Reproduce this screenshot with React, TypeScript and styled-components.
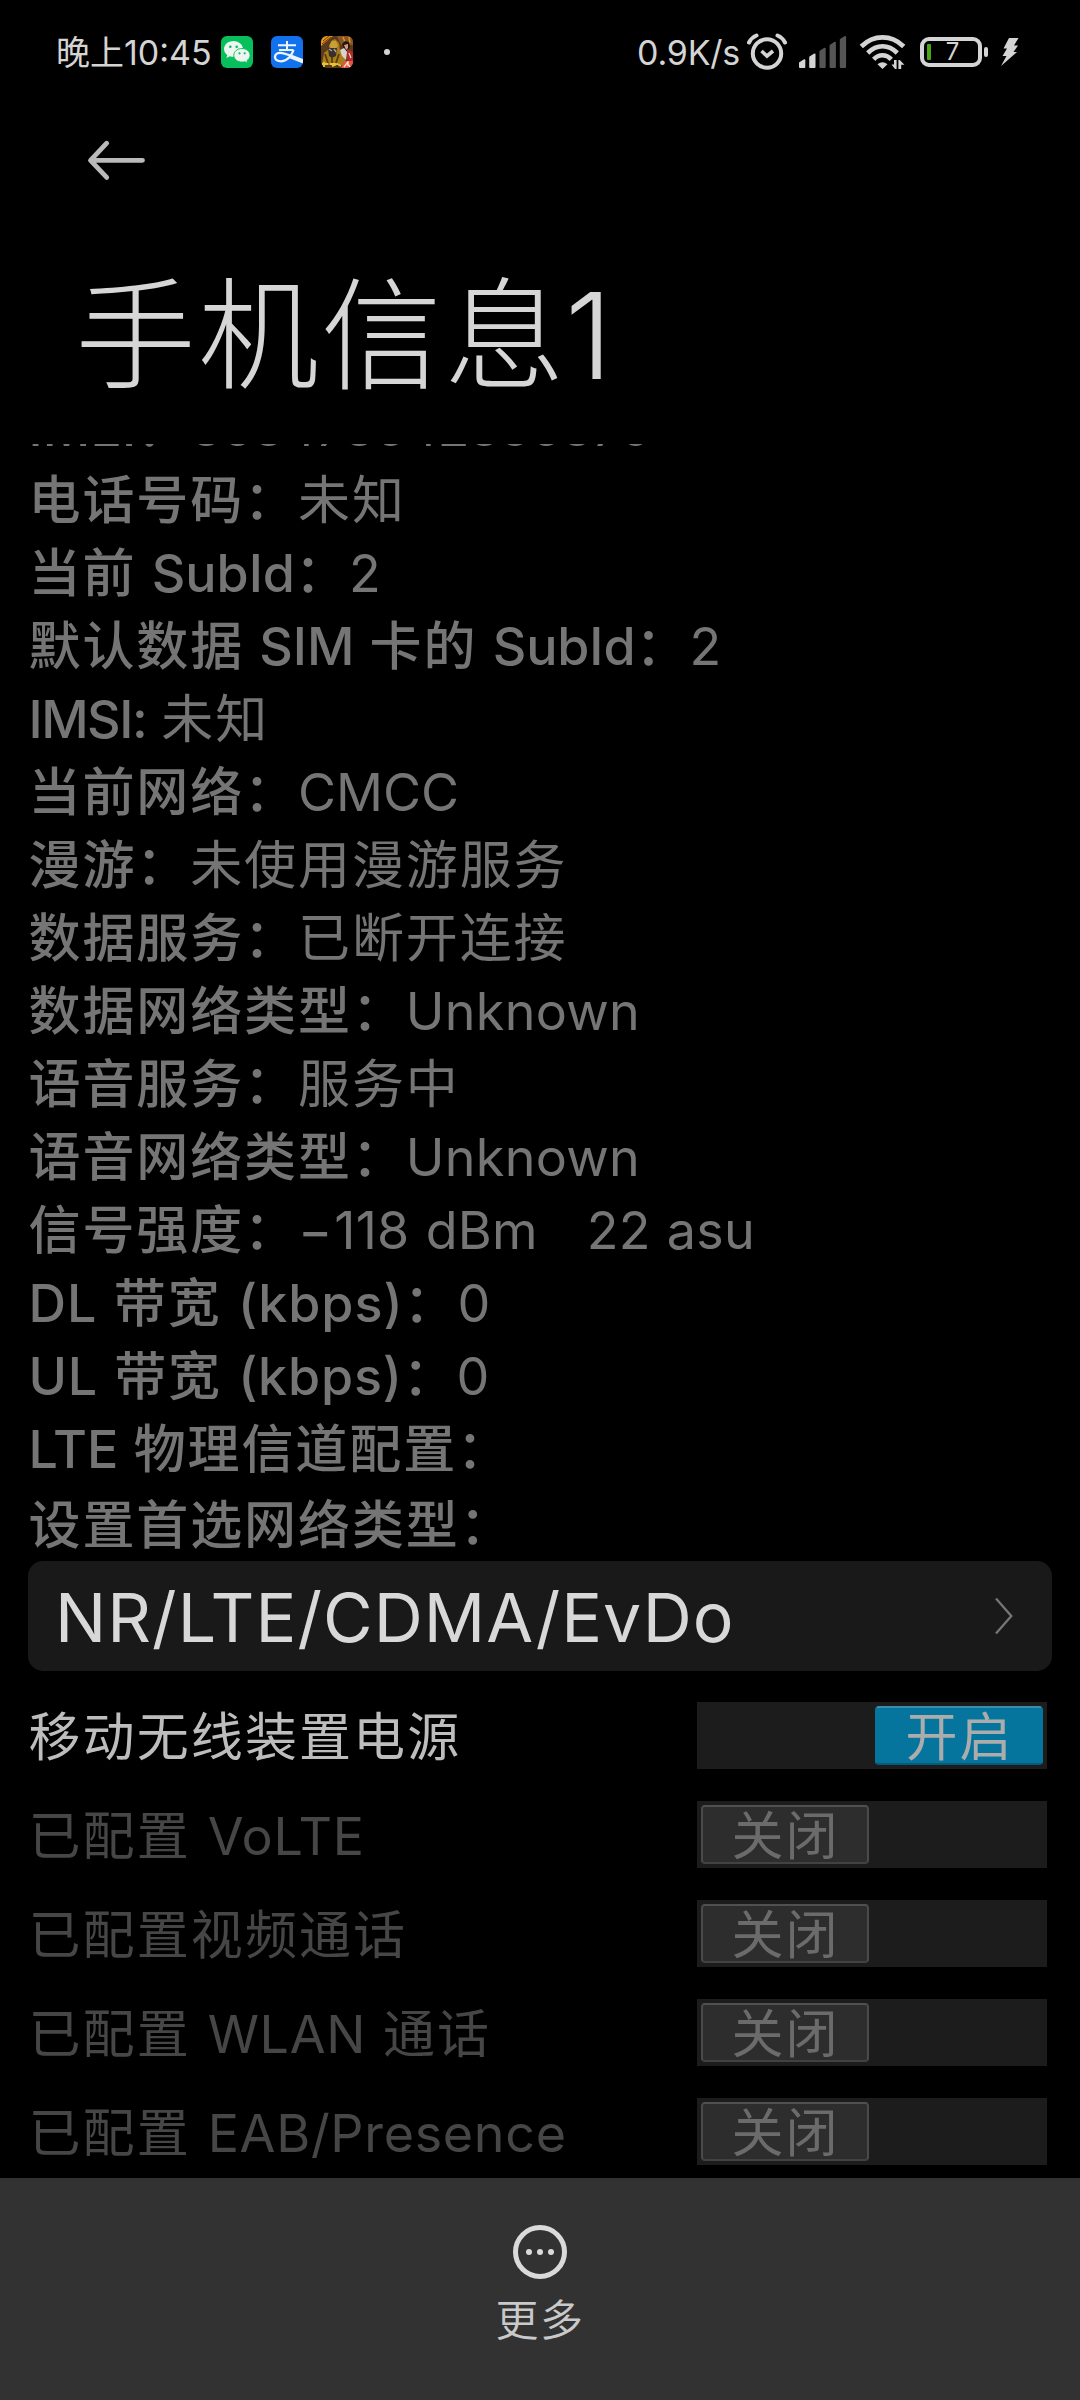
import React from "react";
import styled, { createGlobalStyle } from "styled-components";

const GlobalStyle = createGlobalStyle`
  * { box-sizing: border-box; }
  body { margin: 0; background: #000; }
`;

const Screen = styled.div`
  width: 1080px;
  height: 2400px;
  display: flex;
  flex-direction: column;
  background: #000;
  color: #d4d4d4;
  font-family: "Inter", "Noto Sans CJK SC", sans-serif;
  overflow: hidden;
`;

const StatusBar = styled.div`
  display: flex;
  align-items: center;
  justify-content: space-between;
  height: 104px;
  padding: 0 61px 0 56px;
`;

const StatusSide = styled.div`
  display: flex;
  align-items: center;
  height: 44px;
`;

const StatusText = styled.span<{ $width: number; $spacing: number }>`
  width: ${(p) => p.$width}px;
  padding-top: 1px;
  font-size: 34px;
  line-height: 44px;
  letter-spacing: ${(p) => p.$spacing}px;
  white-space: nowrap;
`;

const AppIcon = styled.svg`
  width: 32px;
  height: 32px;
  margin-right: 18px;
  border-radius: 6px;
  flex: none;
`;

const NotificationDot = styled.i`
  width: 6px;
  height: 6px;
  margin-left: 13px;
  border-radius: 50%;
  background: #d4d4d4;
`;

const Glyph = styled.svg<{ $gap?: number }>`
  display: block;
  flex: none;
  margin-left: ${(p) => p.$gap ?? 0}px;
`;

const Header = styled.header`
  height: 340px;
  flex: none;
`;

const BackButton = styled.button`
  display: block;
  margin: 32px 0 0 84px;
  padding: 0;
  border: 0;
  background: none;
  height: 48px;
`;

const Title = styled.h1`
  margin: 91px 0 0 75px;
  font-size: 121px;
  line-height: 120px;
  font-weight: 300;
  letter-spacing: 2px;
  color: #d6d6d6;
  white-space: nowrap;
`;

const TitleDigit = styled.span`
  margin-left: -2px;
  font-weight: 260;
  font-size: 120px;
`;

const Content = styled.main`
  flex: 1;
  min-height: 0;
  overflow: hidden;
  display: flex;
  flex-direction: column;
`;

const InfoList = styled.div`
  flex: none;
  margin-top: -53px;
  padding-left: 28.5px;
`;

const InfoRow = styled.div`
  height: 73px;
  line-height: 73px;
  font-size: 52px;
  letter-spacing: 1.9px;
  color: #757575;
  white-space: pre;
`;

const Label = styled.span`
  font-weight: 500;
`;

const Value = styled.span`
  font-weight: 400;
`;

const Latin = styled.span<{ $spacing: number }>`
  letter-spacing: ${(p) => p.$spacing}px;
  word-spacing: 1.5px;
`;

const Preferred = styled(InfoRow)`
  height: 75px;
  line-height: 79px;
  padding-left: 28.5px;
  flex: none;
`;

const Select = styled.div`
  flex: none;
  display: flex;
  align-items: center;
  justify-content: space-between;
  height: 110px;
  margin: 0 28px 31px;
  padding: 0 38px 0 27px;
  border-radius: 15px;
  background: #191919;
  font-size: 68px;
  letter-spacing: 1.05px;
  color: #d8d8d8;
`;

const SelectText = styled.span`
  padding-top: 2px;
`;

const SwitchRow = styled.div<{ $on: boolean }>`
  flex: none;
  display: flex;
  align-items: center;
  justify-content: space-between;
  height: 67px;
  margin-bottom: 32px;
  padding: 0 33px 0 28.5px;
  font-size: 52px;
  letter-spacing: 2.1px;
  white-space: pre;
  color: ${(p) => (p.$on ? "#bdbdbd" : "#464646")};
`;

const SwitchLabel = styled.span`
  padding-bottom: 4px;
`;

const Track = styled.div<{ $on: boolean }>`
  display: flex;
  justify-content: ${(p) => (p.$on ? "flex-end" : "flex-start")};
  align-items: center;
  width: 350px;
  height: 67px;
  padding: 0 4px;
  background: #1c1c1c;
`;

const Thumb = styled.div<{ $on: boolean }>`
  width: 168px;
  height: 59px;
  padding-left: 1px;
  border: 2px solid ${(p) => (p.$on ? "#05759d" : "#4a4a4a")};
  border-top-color: ${(p) => (p.$on ? "#3a8fae" : "#505050")};
  border-bottom-color: ${(p) => (p.$on ? "#055b7a" : "#424242")};
  border-radius: 4px;
  background: ${(p) => (p.$on ? "#05759d" : "#2d2d2d")};
  color: ${(p) => (p.$on ? "#acacac" : "#6b6b6b")};
  line-height: 59px;
  text-align: center;
`;

const BottomBar = styled.nav`
  flex: none;
  display: flex;
  flex-direction: column;
  align-items: center;
  height: 222px;
  padding-top: 46px;
  background: #323232;
`;

const MoreLabel = styled.span`
  margin-top: 9px;
  font-size: 43px;
  line-height: 62px;
  letter-spacing: 1.5px;
  font-weight: 350;
  color: #c9c9c9;
`;

const Mixed = ({ text, spacing = 0 }: { text: string; spacing?: number }) => (
  <>
    {text.split(/([\x20-\x7e]+)/).map((part, i) =>
      i % 2 ? <Latin key={i} $spacing={spacing}>{part}</Latin> : part
    )}
  </>
);

type Info = { label: string; value: string; labelSpacing?: number; valueSpacing?: number };

const info: Info[] = [
  { label: "IMEI：", value: "868478642836875", labelSpacing: 0.2, valueSpacing: -1.2 },
  { label: "电话号码：", value: "未知" },
  { label: "当前 SubId：", value: "2" },
  { label: "默认数据 SIM 卡的 SubId：", value: "2", labelSpacing: -0.1 },
  { label: "IMSI:", value: " 未知", labelSpacing: -1.5, valueSpacing: -1 },
  { label: "当前网络：", value: "CMCC" },
  { label: "漫游：", value: "未使用漫游服务" },
  { label: "数据服务：", value: "已断开连接" },
  { label: "数据网络类型：", value: "Unknown", valueSpacing: 0.3 },
  { label: "语音服务：", value: "服务中" },
  { label: "语音网络类型：", value: "Unknown", valueSpacing: 0.3 },
  { label: "信号强度：", value: "−118 dBm   22 asu", valueSpacing: 0.2 },
  { label: "DL 带宽 (kbps)：", value: "0", labelSpacing: 1 },
  { label: "UL 带宽 (kbps)：", value: "0", labelSpacing: 0.8 },
  { label: "LTE 物理信道配置：", value: "" },
];

const switches = [
  { label: "移动无线装置电源", on: true },
  { label: "已配置 VoLTE", on: false },
  { label: "已配置视频通话", on: false },
  { label: "已配置 WLAN 通话", on: false },
  { label: "已配置 EAB/Presence", on: false },
];

const WeChat = () => (
  <AppIcon viewBox="0 0 32 32">
    <rect width="32" height="32" fill="#07bf5b" />
    <path d="M12.500 5C7.200 5 3 8.600 3 13c0 2.500 1.300 4.600 3.300 6l-.9 3 3.500-1.800c1.100.4 2.300.6 3.600.6 5.300 0 9.500-3.500 9.500-7.800S17.800 5 12.500 5z" fill="#ecf5ef" />
    <circle cx="9.300" cy="10.700" r="1.300" fill="#07bf5b" />
    <circle cx="15.700" cy="10.700" r="1.300" fill="#07bf5b" />
    <path d="M21 12.500c-4.600 0-8.200 3-8.200 6.800s3.600 6.800 8.200 6.800c1 0 1.900-.1 2.800-.4l2.900 1.600-.8-2.600c2-1.300 3.200-3.200 3.200-5.400 0-3.800-3.600-6.800-8.100-6.800z" fill="#ecf5ef" stroke="#07bf5b" strokeWidth=".9" />
    <circle cx="18.500" cy="17.300" r="1.100" fill="#07bf5b" />
    <circle cx="23.700" cy="17.300" r="1.100" fill="#07bf5b" />
  </AppIcon>
);

const Alipay = () => (
  <AppIcon viewBox="0 0 32 32">
    <rect width="32" height="32" fill="#1272ee" />
    <g fill="none" stroke="#edf3fb" strokeWidth="2">
      <path d="M7 9.200h18M16 5v9.500M8 14h14.500" />
      <path d="M22.500 14c-1.400 5-6.300 11.300-12 11.300-4 0-6.500-1.600-6.500-4.300 0-2.500 2.300-4.100 5.300-4.100 4.700 0 10.500 3 22.700 7.300" strokeWidth="2.300" />
    </g>
    <path d="M20 20.300L32 24v3.500l-13.500-5.300z" fill="#edf3fb" />
  </AppIcon>
);

const Game = () => (
  <AppIcon viewBox="0 0 32 32">
    <rect width="32" height="32" fill="#5b3a1c" />
    <path d="M0 0h12L0 10z" fill="#e39a1c" />
    <path d="M2 5l6-5M1 8l9-7" stroke="#6a3a10" strokeWidth="1" />
    <path d="M16 0h16v9H20z" fill="#8a5520" />
    <path d="M22 1l2 5M28 1l1 6" stroke="#d59238" strokeWidth="1.500" />
    <path d="M1 28l2-11 5-4 2-8 4-2 4 4 1 8 5 4 1 10H1z" fill="#a87d1c" />
    <path d="M8 10l3-5 4 0 2 5-2 2-5 0z" fill="#c9a038" />
    <path d="M7 12h9l-1 8-4 2-3-2z" fill="#38302a" />
    <path d="M8 13l3 2M13 13l2 3" stroke="#a8a095" strokeWidth="1.500" />
    <path d="M4 18l3 9M18 18l-3 9M11 21v7" stroke="#5a3d0c" strokeWidth="1.800" />
    <path d="M21 8l3-3 4 1 1 5-3 4-3-2z" fill="#241612" />
    <path d="M23 9l4-1v4l-2 2z" fill="#d79b7c" />
    <path d="M19 14l4-2 3 4-1 8-4-4z" fill="#d8d3cd" />
    <path d="M26 13l6 3v12l-6-5z" fill="#b32d26" />
    <path d="M28 17l2 5" stroke="#e6dcd4" strokeWidth="1.200" />
    <path d="M1 28h6M3 26v5M9 28h6M11 30l5-2 4 2" stroke="#e8c33a" strokeWidth="1.900" />
    <path d="M20 32l3-7h9v7z" fill="#e5553f" />
    <path d="M23 31l3-4 3 4M27 25v5" stroke="#f8dfd4" strokeWidth="1.300" fill="none" />
  </AppIcon>
);

const Alarm = () => (
  <Glyph width="42" height="40" viewBox="0 0 42 40">
    <g fill="none" stroke="#d4d4d4">
      <circle cx="21" cy="21.500" r="14.200" strokeWidth="4" />
      <path d="M15.500 19l5.500 5 6-5" strokeWidth="3.600" />
      <path d="M3 10.500Q5.500 5.500 10.500 3.500M31.500 3.500q5 2 7.500 7" strokeWidth="4" strokeLinecap="round" />
    </g>
  </Glyph>
);

const Signal = () => (
  <Glyph $gap={11} width="48" height="32" viewBox="0 0 48 32">
    {[0, 1, 2, 3, 4].map((i) => {
      const x = i * 10.200;
      const top = 23.500 - i * 5.800;
      return (
        <path
          key={i}
          d={`M${x} ${top + 3}l4.600-3q1.700-.8 1.700.8V31q0 1-1 1H${x + 1}q-1 0-1-1z`}
          fill={i < 2 ? "#d4d4d4" : "#555"}
        />
      );
    })}
  </Glyph>
);

const Wifi = () => (
  <Glyph $gap={12} width="48" height="36" viewBox="0 0 48 36">
    <g fill="none" stroke="#d4d4d4" strokeWidth="4.600">
      <path d="M2.300 12.500Q11.500 3.400 23.500 3.400T44.700 12.500" />
      <path d="M8.700 19Q15.500 12.300 23.500 12.300T38.300 19" />
      <path d="M14.700 25.300Q18.500 21.300 23.500 21.300T32.300 25.300" />
    </g>
    <path d="M18.500 30.300q5-4.300 10 0l-5 4.700z" fill="#d4d4d4" />
    <path d="M32.500 30.500h2.500V26h2.600v9h-1.600zM39.400 35v-9h1.400l4.600 4.800h-3.200V35z" fill="#d4d4d4" />
  </Glyph>
);

const BatteryBox = styled.div`
  display: flex;
  align-items: center;
  justify-content: center;
  width: 62px;
  height: 30px;
  margin-left: 13px;
  padding: 0 0 0 3px;
  border: 4px solid #d4d4d4;
  border-radius: 9px;
  font-size: 24px;
  line-height: 22px;
  position: relative;

  &::before {
    content: "";
    position: absolute;
    left: 3px;
    top: 3px;
    width: 4px;
    height: 16px;
    border-radius: 1px;
    background: #4aa812;
  }

  &::after {
    content: "";
    position: absolute;
    right: -10px;
    top: 6px;
    width: 4px;
    height: 10px;
    border-radius: 2px;
    background: #d4d4d4;
  }
`;

const App = () => (
  <Screen>
    <GlobalStyle />
    <StatusBar>
      <StatusSide>
        <StatusText $width={165} $spacing={0}>晚上10:45</StatusText>
        <WeChat />
        <Alipay />
        <Game />
        <NotificationDot />
      </StatusSide>
      <StatusSide>
        <StatusText $width={109} $spacing={-0.2}>0.9K/s</StatusText>
        <Alarm />
        <Signal />
        <Wifi />
        <BatteryBox>7</BatteryBox>
        <Glyph $gap={19} width="18" height="28" viewBox="0 0 18 28">
          <path d="M8 0h9.500L13 7.500h4L12.500 14H16L0 28l5.500-10H1.500L6 10.500H2.500z" fill="#d4d4d4" />
        </Glyph>
      </StatusSide>
    </StatusBar>
    <Header>
      <BackButton aria-label="返回">
        <svg width="64" height="48" viewBox="0 0 64 48">
          <path d="M58.500 24.300H7M22.700 7.200L6.500 24.300l16.200 17.100" fill="none" stroke="#bababa" strokeWidth="4.800" strokeLinecap="round" strokeLinejoin="round" />
        </svg>
      </BackButton>
      <Title>手机信息<TitleDigit>1</TitleDigit></Title>
    </Header>
    <Content>
      <InfoList>
        {info.map(({ label, value, labelSpacing, valueSpacing }) => (
          <InfoRow key={label}>
            <Label><Mixed text={label} spacing={labelSpacing} /></Label>
            <Value><Mixed text={value} spacing={valueSpacing} /></Value>
          </InfoRow>
        ))}
      </InfoList>
      <Preferred>
        <Label>设置首选网络类型：</Label>
      </Preferred>
      <Select>
        <SelectText>NR/LTE/CDMA/EvDo</SelectText>
        <svg width="20" height="38" viewBox="0 0 20 38">
          <path d="M2 1.500L17.300 19 2 36.500" fill="none" stroke="#757575" strokeWidth="2.300" />
        </svg>
      </Select>
      {switches.map(({ label, on }) => (
        <SwitchRow key={label} $on={on}>
          <SwitchLabel><Mixed text={label} spacing={0.7} /></SwitchLabel>
          <Track $on={on}>
            <Thumb $on={on}>{on ? "开启" : "关闭"}</Thumb>
          </Track>
        </SwitchRow>
      ))}
    </Content>
    <BottomBar>
      <svg width="56" height="56" viewBox="0 0 56 56">
        <circle cx="28" cy="28" r="24.500" fill="none" stroke="#dadada" strokeWidth="5" />
        <circle cx="17" cy="28" r="3" fill="#dadada" />
        <circle cx="28" cy="28" r="3" fill="#dadada" />
        <circle cx="39" cy="28" r="3" fill="#dadada" />
      </svg>
      <MoreLabel>更多</MoreLabel>
    </BottomBar>
  </Screen>
);

export default App;
